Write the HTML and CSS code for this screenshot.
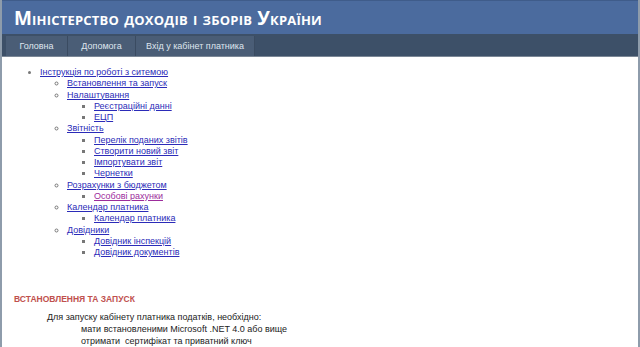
FILE: index.html
```html
<!DOCTYPE html>
<html lang="uk">
<head>
  <meta charset="UTF-8">
  <title>Міністерство доходів і зборів України</title>
  <link rel="stylesheet" href="styles.css">
</head>
<body>
  <div class="page">
    <div class="header">
      <h1>Міністерство доходів і зборів України</h1>
    </div>
    <div class="nav">
      <a href="#">Головна</a>
      <a href="#">Допомога</a>
      <a href="#">Вхід у кабінет платника</a>
    </div>

    <div class="content">
      <ul class="toc">
        <li><a href="#">Інструкція по роботі з ситемою</a>
          <ul>
            <li><a href="#install">Встановлення та запуск</a></li>
            <li><a href="#">Налаштування</a>
              <ul>
                <li><a href="#">Реєстраційні данні</a></li>
                <li><a href="#">ЕЦП</a></li>
              </ul>
            </li>
            <li><a href="#">Звітність</a>
              <ul>
                <li><a href="#">Перелік поданих звітів</a></li>
                <li><a href="#">Створити новий звіт</a></li>
                <li><a href="#">Імпортувати звіт</a></li>
                <li><a href="#">Чернетки</a></li>
              </ul>
            </li>
            <li><a href="#">Розрахунки з бюджетом</a>
              <ul>
                <li><a href="#" class="visited">Особові рахунки</a></li>
              </ul>
            </li>
            <li><a href="#">Календар платника</a>
              <ul>
                <li><a href="#">Календар платника</a></li>
              </ul>
            </li>
            <li><a href="#">Довідники</a>
              <ul>
                <li><a href="#">Довідник інспекцій</a></li>
                <li><a href="#">Довідник документів</a></li>
              </ul>
            </li>
          </ul>
        </li>
      </ul>

      <h3 id="install">Встановлення та запуск</h3>
      <p class="lead">Для запуску кабінету платника податків, необхідно:</p>
      <p class="step">мати встановленими Microsoft .NET 4.0 або вище</p>
      <p class="step">отримати&nbsp; сертифікат та приватний ключ</p>
    </div>
  </div>
</body>
</html>
```

FILE: styles.css
```css
body {
  margin: 0;
  font-family: "Liberation Sans", Arial, sans-serif;
  background-color: #fff;
  color: #222;
}
.page {
  border-left: 2px solid #8e9cab;
  border-right: 2px solid #8e9cab;
  min-height: 347px;
  box-sizing: border-box;
}
.header {
  background-color: #4b6b9e;
  height: 34px;
  border-top: 1px solid #3f5c8a;
  box-sizing: border-box;
}
.header h1 {
  margin: 0;
  padding: 6px 0 0 12px;
  font-family: "Open Sans", sans-serif;
  font-size: 19px;
  font-weight: bold;
  font-variant: small-caps;
  letter-spacing: 0.2px;
  color: #fff;
  line-height: 22px;
}
.nav {
  display: flex;
  background-color: #3d5068;
  height: 23px;
  padding: 2px 0 0 4px;
  box-sizing: border-box;
  border-bottom: 1px solid #7b8796;
}
.nav a {
  background-color: #4a5d76;
  border-right: 1px solid #3a4b61;
  color: #dfe5ee;
  text-decoration: none;
  font-size: 9px;
  line-height: 20px;
  height: 20px;
  text-align: center;
  white-space: nowrap;
}
.nav a:nth-child(1) { width: 61px; }
.nav a:nth-child(2) { width: 67px; }
.nav a:nth-child(3) { width: 118px; }

.content {
  padding: 10px 0 0 12px;
}
.toc, .toc ul {
  margin: 0;
  padding-left: 27px;
  font-size: 9px;
  line-height: 11.25px;
}
.toc {
  padding-left: 26px;
  list-style: disc;
}
.toc ul {
  list-style: circle;
}
.toc ul ul {
  list-style: square;
}
.toc li::marker {
  color: #777;
}
.toc a {
  color: #2b2bb8;
}
.toc a.visited {
  color: #9c2c9c;
}
h3 {
  margin: 35px 0 0 0;
  font-size: 8.5px;
  line-height: 12px;
  font-weight: bold;
  color: #c0504d;
  text-transform: uppercase;
}
p {
  margin: 0;
  font-size: 9px;
  line-height: 12px;
  color: #222;
}
.lead {
  margin-top: 6px;
  padding-left: 33px;
}
.step {
  padding-left: 67px;
}
```
